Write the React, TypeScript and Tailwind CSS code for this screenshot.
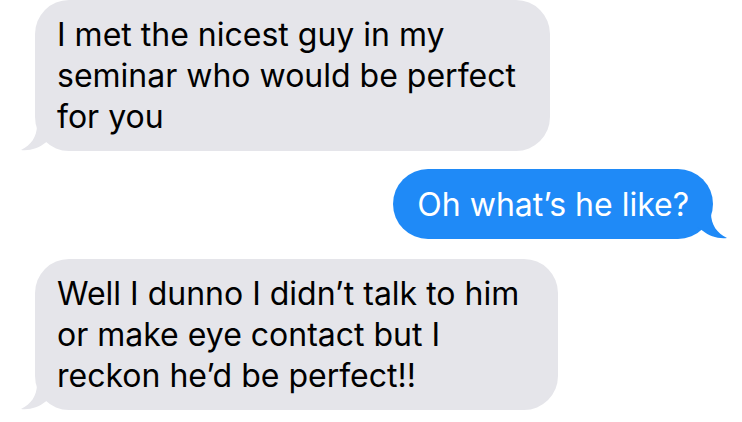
const GRAY = "#e5e5ea";
const BLUE = "#1f8af7";

const TailLeft = ({ color }: { color: string }) => (
  <svg
    className="absolute left-[-14px] bottom-0"
    width="30"
    height="26"
    viewBox="0 0 30 26"
  >
    <path
      d="M16 0 C16 12 10 20 0 25 C9 26 18 23 24 18 L30 14 L30 0 Z"
      fill={color}
    />
  </svg>
);

const TailRight = ({ color }: { color: string }) => (
  <svg
    className="absolute right-[-14px] bottom-0"
    width="30"
    height="26"
    viewBox="0 0 30 26"
  >
    <path
      d="M14 0 C14 12 20 20 30 25 C21 26 12 23 6 18 L0 14 L0 0 Z"
      fill={color}
    />
  </svg>
);

const Received = ({ lines, width }: { lines: string[]; width: string }) => (
  <div className={`relative ${width} rounded-[34px] bg-[#e5e5ea] pl-[22px] pr-4 py-[14px]`}>
    {lines.map((l) => (
      <div key={l} className="whitespace-nowrap leading-[41px]">
        {l}
      </div>
    ))}
    <TailLeft color={GRAY} />
  </div>
);

export default function App() {
  return (
    <div
      className="w-[742px] h-[422px] bg-white overflow-hidden flex flex-col text-[32px] text-black"
      style={{ fontFamily: 'Inter, "Liberation Sans", Arial, sans-serif' }}
    >
      <div className="pl-[35px]">
        <Received
          width="w-[515px]"
          lines={["I met the nicest guy in my", "seminar who would be perfect", "for you"]}
        />
      </div>
      <div className="flex justify-end pr-[29px] mt-[18px]">
        <div className="relative rounded-[35px] bg-[#1f8af7] text-white px-[24px] h-[70px] flex items-center leading-[41px] whitespace-nowrap">
          Oh what’s he like?
          <TailRight color={BLUE} />
        </div>
      </div>
      <div className="pl-[35px] mt-[20px]">
        <Received
          width="w-[523px]"
          lines={["Well I dunno I didn’t talk to him", "or make eye contact but I", "reckon he’d be perfect!!"]}
        />
      </div>
    </div>
  );
}
